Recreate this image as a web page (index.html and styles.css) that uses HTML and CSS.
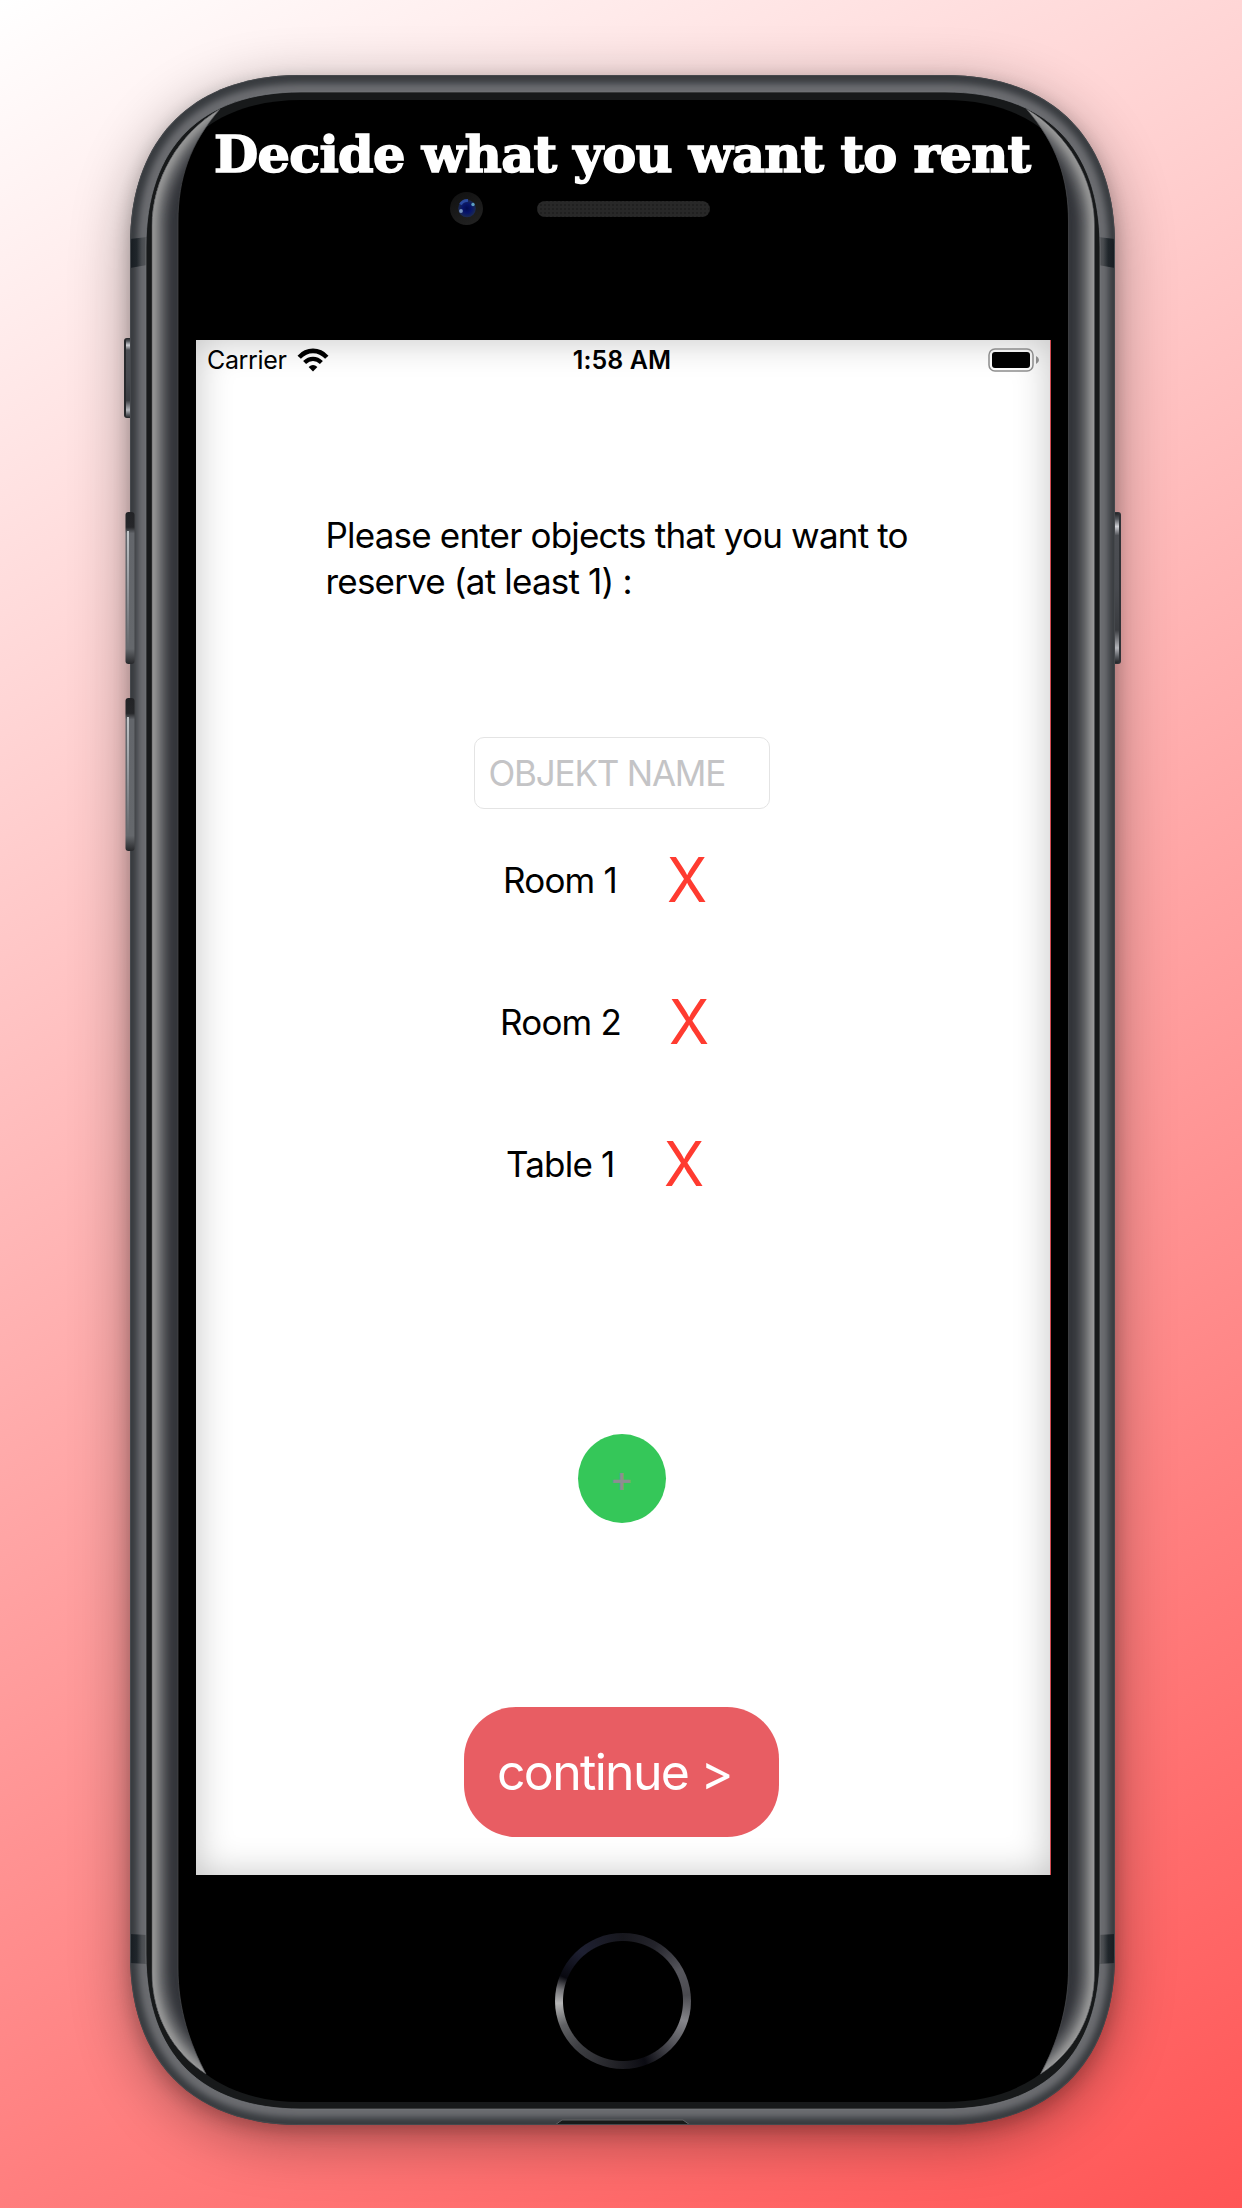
FILE: index.html
```html
<!DOCTYPE html>
<html lang="en">
<head>
<meta charset="utf-8">
<title>Decide what you want to rent</title>
<link rel="stylesheet" href="styles.css">
</head>
<body>
<main class="stage">
  <svg class="device" viewBox="0 0 1242 2208" aria-hidden="true">
    <defs>
      <path id="body" d="M300 75H945C1052 75 1115 138 1115 245V1955C1115 2062 1052 2125 945 2125H300C193 2125 130 2062 130 1955V245C130 138 193 75 300 75Z"/>
      <path id="bezel" d="M301 92H945C1045 92 1100 147 1100 247V1954C1100 2054 1045 2109 945 2109H301C201 2109 146 2054 146 1954V247C146 147 201 92 301 92Z"/>
      <path id="glass" d="M220 109C178 134 152 180 152 226V1972C152 2015 172 2052 206 2074C190 2044 178 2010 178 1968V222C178 178 190 144 220 109Z"/>
      <path id="glassEdge" d="M220 109C178 134 152 180 152 226V1972C152 2015 172 2052 206 2074"/>
      <clipPath id="bodyClip"><use href="#body"/></clipPath>
      <clipPath id="glassClip"><use href="#glass"/></clipPath>
      <filter id="shadowWide" x="-20%" y="-10%" width="140%" height="120%"><feGaussianBlur stdDeviation="30"/></filter>
      <filter id="shadowNear" x="-20%" y="-10%" width="140%" height="120%"><feGaussianBlur stdDeviation="9"/></filter>
      <filter id="soft3" filterUnits="userSpaceOnUse" x="0" y="0" width="1242" height="2208"><feGaussianBlur stdDeviation="3"/></filter>
      <filter id="soft5" filterUnits="userSpaceOnUse" x="100" y="60" width="200" height="2080"><feGaussianBlur stdDeviation="4.5"/></filter>
      <linearGradient id="key" x1="0" y1="0" x2="0" y2="1">
        <stop offset="0" stop-color="#222326"/><stop offset=".04" stop-color="#55585d"/><stop offset=".09" stop-color="#d0d1d6"/><stop offset=".15" stop-color="#4c4e53"/>
        <stop offset=".5" stop-color="#47494e"/><stop offset=".78" stop-color="#3a3c40"/><stop offset=".9" stop-color="#b5b6bb"/><stop offset=".96" stop-color="#55585d"/><stop offset="1" stop-color="#222326"/>
      </linearGradient>
      <linearGradient id="volume" x1="0" y1="0" x2="0" y2="1">
        <stop offset="0" stop-color="#222326"/><stop offset=".1" stop-color="#26272a"/><stop offset=".14" stop-color="#63666b"/><stop offset=".9" stop-color="#65686c"/><stop offset="1" stop-color="#27282b"/>
      </linearGradient>
      <linearGradient id="glint" x1="0" y1="0" x2="0" y2="1">
        <stop offset="0" stop-color="#c2c5c8"/><stop offset=".5" stop-color="#92959a"/><stop offset="1" stop-color="#65686c"/>
      </linearGradient>
      <linearGradient id="band"><stop offset="0" stop-color="#171c21"/><stop offset=".4" stop-color="#20262b"/><stop offset=".7" stop-color="#494c50"/><stop offset="1" stop-color="#55575a"/></linearGradient>
      <radialGradient id="lens" cx=".5" cy=".5" r=".5"><stop offset="0" stop-color="#020b4e"/><stop offset=".5" stop-color="#07146a"/><stop offset="1" stop-color="#1b2a52"/></radialGradient>
      <linearGradient id="lensRing" x1="0" y1="0" x2=".5" y2="1"><stop offset="0" stop-color="#101010"/><stop offset="1" stop-color="#202020"/></linearGradient>
      <pattern id="mesh" width="4" height="4" patternUnits="userSpaceOnUse"><path fill="#282828" d="M0 0h4v4H0z"/><path fill="#202020" d="M0 0h2v2H0z"/></pattern>
    </defs>

    <use href="#body" transform="translate(0 14)" fill="#100" opacity=".34" filter="url(#shadowWide)"/>
    <use href="#body" transform="translate(0 6)" fill="#100" opacity=".24" filter="url(#shadowNear)"/>

    <!-- side buttons -->
    <rect x="124" y="338" width="12" height="80" rx="3" fill="#28292c"/>
    <rect x="126" y="338" width="8" height="80" rx="3" fill="url(#key)"/>
    <rect x="1110" y="512" width="11" height="152" rx="3" fill="#303236"/>
    <rect x="1113" y="513" width="6" height="150" rx="3" fill="url(#key)"/>

    <use href="#body" fill="#383b3f"/>
    <g clip-path="url(#bodyClip)">
      <use href="#bezel" fill="none" stroke="#6b6c70" stroke-width="17" filter="url(#soft3)"/>
      <path d="M130 239l17-2v28l-17 3zM130 1934l17 1v29l-17-1z" fill="url(#band)"/>
      <path transform="matrix(-1 0 0 1 1245 0)" d="M130 239l17-2v28l-17 3zM130 1934l17 1v29l-17-1z" fill="url(#band)"/>
      <path d="M555 2125l7-5H683l7 5Z" fill="#171a19" stroke="#606265" stroke-width="1"/>
      <use href="#body" fill="none" stroke="#45484c" stroke-width="2"/>
    </g>
    <rect x="125.500" y="512" width="9" height="152" rx="3" fill="url(#volume)"/>
    <rect x="127" y="531" width="2" height="118" fill="url(#glint)"/>
    <rect x="125.500" y="698" width="9" height="153" rx="3" fill="url(#volume)"/>
    <rect x="127" y="717" width="2" height="118" fill="url(#glint)"/>

    <use href="#bezel" fill="#17191a" stroke="#77797c" stroke-width=".7"/>
    <path d="M301 100H945C1037 100 1093 155 1093 247V1954C1093 2046 1037 2102 945 2102H301C209 2102 153 2046 153 1954V247C153 155 209 100 301 100Z"/>

    <!-- curved glass edges -->
    <g id="rim">
      <use href="#glass" fill="#33353a"/>
      <g clip-path="url(#glassClip)">
        <use href="#glassEdge" fill="none" stroke="#66686b" stroke-width="28" filter="url(#soft5)"/>
        <use href="#glassEdge" fill="none" stroke="#989898" stroke-width="11" filter="url(#soft3)"/>
        <use href="#glassEdge" fill="none" stroke="#a5a5a5" stroke-width="1.500"/>
      </g>
      <use href="#glass" fill="none" stroke="#4a4c4f" stroke-width=".7"/>
    </g>
    <use href="#rim" transform="matrix(-1 0 0 1 1246.500 0)"/>

    <!-- camera and earpiece -->
    <circle cx="466.500" cy="208.500" r="16.500" fill="url(#lensRing)"/>
    <circle cx="467" cy="208.500" r="8.800" fill="url(#lens)"/>
    <path d="M460.500 204.500Q463 200 468 200.500" fill="none" stroke="#3054b5" stroke-width="3" opacity=".8"/>
    <circle cx="473" cy="204.500" r="1.700" fill="#5e9fc0"/><circle cx="461" cy="211" r="1.900" fill="#7593bd"/>
    <rect x="537" y="201" width="173" height="16" rx="8" fill="url(#mesh)"/>
  </svg>

  <section class="phone">
    <header class="forehead"><h1 class="headline">Decide what you want to rent</h1></header>
    <div class="screen">
      <div class="status">
        <div class="network"><span class="carrier">Carrier</span>
          <svg class="wifi" width="32" height="24" viewBox="0 0 32 24" aria-hidden="true">
            <path d="M2.200 9.200C10 .8 22 .8 29.800 9.200" fill="none" stroke="#000" stroke-width="4.600"/>
            <path d="M7.600 14.600C12.600 9.600 19.400 9.600 24.400 14.600" fill="none" stroke="#000" stroke-width="4.200"/>
            <path d="M16 23.500L11.600 19Q16 14.800 20.400 19Z"/>
          </svg>
        </div>
        <time class="clock">1:58 AM</time>
        <svg class="battery" width="52" height="24" viewBox="0 0 52 24" aria-hidden="true">
          <rect x="1" y="1" width="44" height="22" rx="6" fill="none" stroke="#8c8c8c" stroke-width="1.500"/>
          <rect x="4" y="4" width="38" height="16" rx="3"/>
          <path d="M48 8Q51 9.500 51 12T48 16Z" fill="#8c8c8c"/>
        </svg>
      </div>
      <p class="prompt">Please enter objects that you want to<br>reserve (at least 1) :</p>
      <input class="field" type="text" placeholder="OBJEKT NAME" aria-label="Object name">
      <ul class="items">
        <li class="item room1"><span class="name">Room 1</span><button class="remove">X</button></li>
        <li class="item room2"><span class="name">Room 2</span><button class="remove">X</button></li>
        <li class="item table1"><span class="name">Table 1</span><button class="remove">X</button></li>
      </ul>
      <button class="add">+</button>
      <button class="continue">continue &gt;</button>
    </div>
    <footer class="chin"><div class="home"></div></footer>
  </section>
</main>
</body>
</html>
```
FILE: styles.css
```css
* { box-sizing: border-box; }
body {
  margin: 0;
  font-family: Inter, "Liberation Sans", sans-serif;
  color: #000;
}
button, input { font: inherit; margin: 0; border: 0; padding: 0; background: none; }
.stage {
  position: relative;
  width: 1242px;
  height: 2208px;
  overflow: hidden;
  background: linear-gradient(150.64deg, #fff, #f55);
}
.device { position: absolute; inset: 0; width: 1242px; height: 2208px; }
.phone {
  position: relative;
  width: 855px;
  margin-left: 196px;
  display: flex;
  flex-direction: column;
}
.forehead { height: 340px; padding-top: 119px; }
.headline {
  margin: 0 0 0 18px;
  font: bold 51px/70px "DejaVu Serif", serif;
  letter-spacing: -.75px;
  -webkit-text-stroke: 1.6px #fff;
  white-space: nowrap;
  color: #fff;
}
.screen {
  height: 1535px;
  padding-right: 3px;
  display: flex;
  flex-direction: column;
  align-items: center;
  background: #fff;
  border-right: 1px solid #d04a50;
  box-shadow: inset 0 0 36px rgba(0, 0, 0, .24);
}
.status {
  width: 100%;
  height: 40px;
  padding: 0 7px 0 11px;
  display: grid;
  grid-template-columns: 1fr auto 1fr;
  align-items: center;
  line-height: 40px;
}
.network { display: flex; align-items: center; gap: 10px; }
.carrier { font-size: 25px; letter-spacing: -.35px; }
.clock { font-size: 25px; font-weight: 600; letter-spacing: .1px; margin-left: -3px; }
.battery { justify-self: end; margin-right: 0; }
.prompt {
  width: 600px;
  margin: 132px 0 0;
  padding-left: 4px;
  font-size: 35px;
  line-height: 46px;
  white-space: nowrap;
  letter-spacing: -.81px;
}
.field {
  width: 296px;
  height: 72px;
  margin-top: 133px;
  padding: 0 14px;
  border: 1.5px solid #e4e4e4;
  border-radius: 10px;
  font-size: 35px;
  letter-spacing: -1.2px;
  background: #fff;
}
.field::placeholder { color: #c4c4c6; opacity: 1; }
.items { list-style: none; width: 100%; height: 426px; margin: 0; padding: 0; }
.item {
  height: 142px;
  display: flex;
  align-items: center;
  font-size: 35px;
}
.name { width: 163px; letter-spacing: -.8px; white-space: nowrap; }
.remove { color: #ff3b30; font-size: 62px; font-weight: 400; line-height: 76px; transform: scaleX(.95); }
.room1 { padding-left: 307px; }
.room2 { padding-left: 304px; }
.room2 .name { width: 168px; }
.table1 { padding-left: 310px; }
.table1 .name { width: 157px; }
.add {
  width: 88px;
  height: 89px;
  margin-top: 199px;
  border-radius: 50%;
  background: #35c759;
  color: #8e8e93;
  font-size: 35px;
  line-height: 89px;
  -webkit-text-stroke: .5px #8e8e93;
}
.continue {
  width: 315px;
  height: 130px;
  margin-top: 184px;
  padding-left: 33px;
  border-radius: 52px;
  background: #e85d63;
  color: #fff;
  font-size: 50px;
  letter-spacing: -1.7px;
  text-align: left;
  white-space: nowrap;
}
.chin { height: 250px; padding: 58px 0 0 359px; }
.home {
  width: 136px;
  height: 136px;
  border-radius: 50%;
  background:
    radial-gradient(circle, #000 59.5px, transparent 60.5px),
    conic-gradient(#17171d, #24242b 30deg, #56565c 62deg, #4b4b50 85deg, #85858a 108deg, #55555b 130deg, #0b0b12 160deg, #202025 185deg, #3f4044 225deg, #606164 248deg, #b5b5b5 268deg, #77777a 280deg, #08080f 292deg, #1e2032 320deg, #17171d);
}
```
